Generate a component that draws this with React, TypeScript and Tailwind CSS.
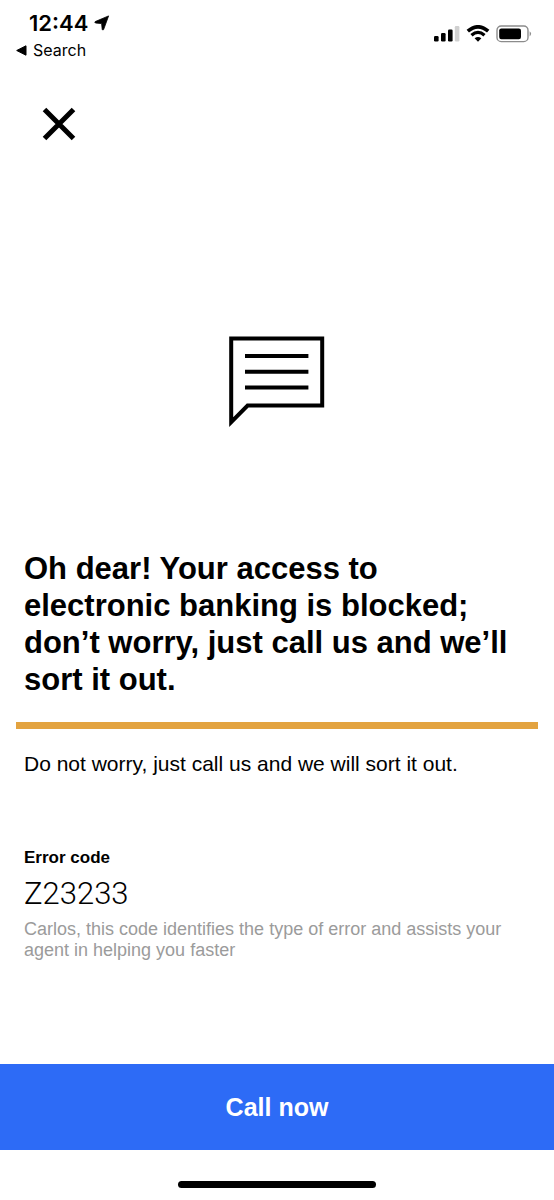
function StatusBar() {
  return (
    <header className="flex h-16 items-start justify-between pr-[22px]">
      <div className="pt-[10px] font-['Inter',sans-serif]">
        <div className="flex items-center gap-[6px] pl-[29px]">
          <time className="text-[22px] leading-[26px] font-semibold">12:44</time>
          <svg className="size-4" viewBox="0 0 16 16" aria-hidden="true">
            <path d="M14.6 0.9 9.6 14.6Q8.6 15.6 8.2 14.4L7.6 8.6 1.4 8Q0.4 7.4 1.2 6.6Z" stroke="#000" strokeWidth="0.8" strokeLinejoin="round" />
          </svg>
        </div>
        <a href="#search" className="flex items-center gap-[6px] pl-[16px]">
          <svg className="h-[11px] w-[11px]" viewBox="0 0 11 11" aria-hidden="true">
            <path d="M0.7 5.5 10 0.8V10.2Z" stroke="#000" strokeLinejoin="round" />
          </svg>
          <span className="text-base leading-7">Search</span>
        </a>
      </div>
      <div className="flex items-center gap-[6px] pt-[25px]" role="img" aria-label="Signal, Wi-Fi and battery">
        <svg className="h-[18px] w-[26px]" viewBox="0 0 26 18">
          <rect x="0" y="11" width="4.6" height="5.5" rx="1.2" />
          <rect x="7" y="8" width="4.6" height="8.5" rx="1.2" />
          <rect x="14" y="4.5" width="4.6" height="12" rx="1.2" />
          <rect x="20.8" y="1" width="4.6" height="15.5" rx="1.2" fill="#d0d0d0" />
        </svg>
        <svg className="h-[18px] w-[24px]" viewBox="0 0 24 18" fill="none" stroke="#000">
          <path d="M1.8 6.2Q12 -2.6 22.2 6.2" strokeWidth="3.6" />
          <path d="M5.5 10.2Q12 4.6 18.5 10.2" strokeWidth="3.3" />
          <path d="M8.6 13.2Q12 10.6 15.4 13.2L12 16.7Z" fill="#000" stroke="none" />
        </svg>
        <svg className="h-[18px] w-[36px]" viewBox="0 0 36 18">
          <rect x="1" y="1" width="31" height="15.6" rx="4.2" fill="none" stroke="#8c8c8c" strokeWidth="1.4" />
          <rect x="3.2" y="3.4" width="21.8" height="10.8" rx="2.2" />
          <path d="M33.6 6.2Q36.6 8.7 33.6 11.4Z" fill="#8c8c8c" />
        </svg>
      </div>
    </header>
  );
}

function MessageIcon() {
  return (
    <svg className="mx-auto h-[92px] w-24 shrink-0" viewBox="0 0 96 92" fill="none" stroke="#000" strokeWidth="4" aria-hidden="true">
      <path d="M2.2 2.4H93.2V69.6H18.6L2.2 86.2Z" />
      <path d="M16 20H79.4M16 35.8H79.4M16 51.6H79.4" />
    </svg>
  );
}

export default function App() {
  return (
    <div className="flex min-h-screen flex-col bg-white font-['Liberation_Sans',Arial,sans-serif] text-black">
      <StatusBar />
      <div className="px-9 pt-[37px]">
        <button type="button" aria-label="Close" className="flex size-[46px] items-center justify-center">
          <svg className="size-9" viewBox="0 0 36 36" fill="none" stroke="#000" strokeWidth="5" aria-hidden="true">
            <path d="M3.5 3.5 32.5 32.5M32.5 3.5 3.5 32.5" />
          </svg>
        </button>
      </div>
      <main className="flex flex-1 flex-col px-4 pt-[189px]">
        <MessageIcon />
        <h1 className="mt-[122px] px-2 text-[31px] leading-[37px] font-bold">
          Oh dear! Your access to electronic banking is blocked; don’t worry, just call us and we’ll sort it out.
        </h1>
        <hr className="mt-6 h-[7px] border-0 bg-[#e3a340]" />
        <p className="mt-[22px] px-2 text-[21px] leading-[26px]">
          Do not worry, just call us and we will sort it out.
        </p>
        <section className="mt-[70px] px-2 pb-24">
          <h2 className="text-[17px] leading-[22px] font-bold">Error code</h2>
          <p className="mt-[7px] font-['Roboto',sans-serif] text-[31px] leading-9 font-light">Z23233</p>
          <p className="mt-[7px] text-[18px] leading-[21px] text-[#9b9b9b]">
            Carlos, this code identifies the type of error and assists your agent in helping you faster
          </p>
        </section>
      </main>
      <footer>
        <button type="button" className="h-[86px] w-full bg-[#2d6bf6] text-[25px] leading-8 font-bold text-white">
          Call now
        </button>
        <div className="flex h-[50px] items-end justify-center pb-3">
          <div className="h-[7px] w-[198px] rounded-full bg-black" />
        </div>
      </footer>
    </div>
  );
}
